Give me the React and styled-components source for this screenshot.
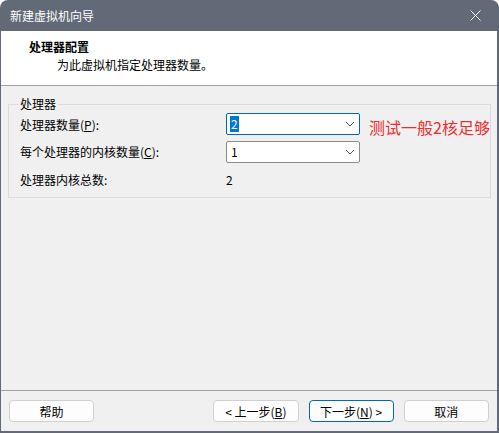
import React from "react";
import styled, { createGlobalStyle } from "styled-components";

const GlobalStyle = createGlobalStyle`
  html, body {
    margin: 0;
    padding: 0;
    background: #ffffff;
  }
  body {
    font-family: "Noto Sans CJK SC", "Noto Sans", sans-serif;
    font-size: 12px;
    color: #000;
  }
`;

const Window = styled.div`
  width: 499px;
  height: 433px;
  box-sizing: border-box;
  display: flex;
  flex-direction: column;
  background: #626a77;
  border-radius: 8px 8px 0 0;
  padding: 0 2px 2px 1px;
  overflow: hidden;
`;

const TitleBar = styled.div`
  height: 31px;
  flex-shrink: 0;
  display: flex;
  align-items: center;
  justify-content: space-between;
  padding: 0 10px 0 9px;
  color: #ffffff;
  font-size: 12px;
`;

const CloseIcon = styled.svg`
  width: 11px;
  height: 11px;
  margin-right: 6px;
`;

const Header = styled.div`
  height: 55px;
  flex-shrink: 0;
  background: #ffffff;
  border-bottom: 1px solid #a0a0a0;
  padding: 8px 0 0 28px;
  box-sizing: border-box;
`;

const HeaderTitle = styled.div`
  font-weight: bold;
  line-height: 16px;
`;

const HeaderSub = styled.div`
  padding-left: 28px;
  margin-top: 2px;
  line-height: 16px;
`;

const Body = styled.div`
  flex: 1;
  background: #f0f0f0;
  display: flex;
  flex-direction: column;
  padding: 11px 8px 0 7px;
`;

const GroupBox = styled.fieldset`
  margin: 0;
  padding: 0 0 10px 11px;
  height: 101px;
  box-sizing: border-box;
  border: 1px solid #dcdcdc;
  width: 482px;
`;

const Legend = styled.legend`
  padding: 0 2px;
  margin-left: -2px;
  line-height: 14px;
`;

const Row = styled.div`
  display: flex;
  align-items: center;
  height: ${(p) => p.h || 28}px;
`;

const Label = styled.div`
  width: 206px;
`;

const Select = styled.div`
  width: 134px;
  height: 22px;
  box-sizing: border-box;
  background: #ffffff;
  border: 1px solid ${(p) => (p.focused ? "#0067c0" : "#8c8c8c")};
  border-radius: 2px;
  display: flex;
  align-items: center;
  justify-content: space-between;
  padding: 0 4px 0 3px;
`;

const SelectValue = styled.span`
  background: ${(p) => (p.selected ? "#0078d7" : "transparent")};
  color: ${(p) => (p.selected ? "#ffffff" : "#000")};
  padding: 0 1px;
  line-height: 16px;
`;

const Note = styled.div`
  color: #f42b2b;
  font-size: 16px;
  margin-left: 9px;
  margin-top: 6px;
  white-space: nowrap;
`;

const Spacer = styled.div`
  flex: 1;
`;

const Footer = styled.div`
  height: 40px;
  flex-shrink: 0;
  border-top: 1px solid #a0a0a0;
  background: #f0f0f0;
  display: flex;
  align-items: center;
  padding: 0 8px 0 8px;
  gap: 10px;
`;

const Button = styled.button`
  width: 86px;
  height: 22px;
  box-sizing: border-box;
  background: #fdfdfd;
  border: 1px solid ${(p) => (p.primary ? "#0067c0" : "#d0d0d0")};
  border-radius: 4px;
  font-family: inherit;
  font-size: 12px;
  color: #000;
  padding: 0;
  margin-left: ${(p) => p.offset || 0}px;
`;

const U = styled.span`
  text-decoration: underline;
`;

export default function App() {
  return (
    <>
      <GlobalStyle />
      <Window>
        <TitleBar>
          <span>新建虚拟机向导</span>
          <CloseIcon viewBox="0 0 11 11">
            <path d="M0.5 0.5 L10.5 10.5 M10.5 0.5 L0.5 10.5" stroke="#ffffff" strokeWidth="1" />
          </CloseIcon>
        </TitleBar>
        <Header>
          <HeaderTitle>处理器配置</HeaderTitle>
          <HeaderSub>为此虚拟机指定处理器数量。</HeaderSub>
        </Header>
        <Body>
          <GroupBox>
            <Legend>处理器</Legend>
            <Row h={26}>
              <Label>
                处理器数量(<U>P</U>):
              </Label>
              <Select focused>
                <SelectValue selected>2</SelectValue>
                <svg width="10" height="6" viewBox="0 0 10 6">
                  <path d="M1 1 L5 5 L9 1" fill="none" stroke="#555" strokeWidth="1" />
                </svg>
              </Select>
              <Note>测试一般2核足够</Note>
            </Row>
            <Row h={29}>
              <Label>
                每个处理器的内核数量(<U>C</U>):
              </Label>
              <Select>
                <SelectValue>1</SelectValue>
                <svg width="10" height="6" viewBox="0 0 10 6">
                  <path d="M1 1 L5 5 L9 1" fill="none" stroke="#555" strokeWidth="1" />
                </svg>
              </Select>
            </Row>
            <Row h={27}>
              <Label>处理器内核总数:</Label>
              <span>2</span>
            </Row>
          </GroupBox>
          <Spacer />
        </Body>
        <Footer>
          <Button>帮助</Button>
          <Button offset={109}>
            &lt; 上一步(<U>B</U>)
          </Button>
          <Button primary>
            下一步(<U>N</U>) &gt;
          </Button>
          <Button>取消</Button>
        </Footer>
      </Window>
    </>
  );
}
